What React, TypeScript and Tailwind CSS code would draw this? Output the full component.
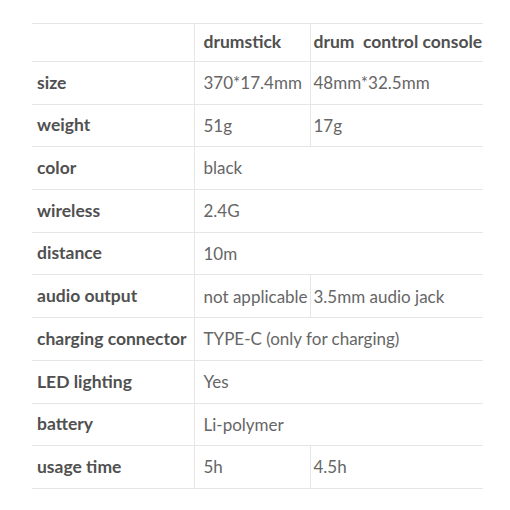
import React from 'react';

type Row = { label: string; a: string; b?: string };

const rows: Row[] = [
  { label: 'size', a: '370*17.4mm', b: '48mm*32.5mm' },
  { label: 'weight', a: '51g', b: '17g' },
  { label: 'color', a: 'black' },
  { label: 'wireless', a: '2.4G' },
  { label: 'distance', a: '10m' },
  { label: 'audio output', a: 'not applicable', b: '3.5mm audio jack' },
  { label: 'charging connector', a: 'TYPE-C (only for charging)' },
  { label: 'LED lighting', a: 'Yes' },
  { label: 'battery', a: 'Li-polymer' },
  { label: 'usage time', a: '5h', b: '4.5h' },
];

export default function App() {
  return (
    <div className="w-[510px] h-[510px] bg-white pt-[23px] pl-[32px] font-['Lato','Noto_Sans',sans-serif] text-[17px]">
      <table className="w-[451px] border-collapse table-fixed">
        <colgroup>
          <col className="w-[162px]" />
          <col className="w-[116px]" />
          <col className="w-[173px]" />
        </colgroup>
        <thead>
          <tr className="h-[38px] border-y border-[#e6e6e6]">
            <th className="border-r border-[#e6e6e6]"></th>
            <th className="text-left font-bold text-[17.5px] text-[#505050] pl-[9px] border-r border-[#e6e6e6] whitespace-nowrap">drumstick</th>
            <th className="text-left font-bold text-[17.5px] text-[#505050] pl-[3px] whitespace-pre">drum  control console</th>
          </tr>
        </thead>
        <tbody>
          {rows.map((r) => (
            <tr key={r.label} className="h-[42.7px] border-b border-[#e6e6e6]">
              <td className="pl-[5px] font-bold text-[17.5px] text-[#505050] border-r border-[#e6e6e6] whitespace-nowrap">{r.label}</td>
              {r.b ? (
                <>
                  <td className="pl-[9px] text-[#666] border-r border-[#e6e6e6] whitespace-nowrap">{r.a}</td>
                  <td className="pl-[3px] text-[#666] whitespace-nowrap">{r.b}</td>
                </>
              ) : (
                <td colSpan={2} className="pl-[9px] text-[#666] whitespace-nowrap">{r.a}</td>
              )}
            </tr>
          ))}
        </tbody>
      </table>
    </div>
  );
}
